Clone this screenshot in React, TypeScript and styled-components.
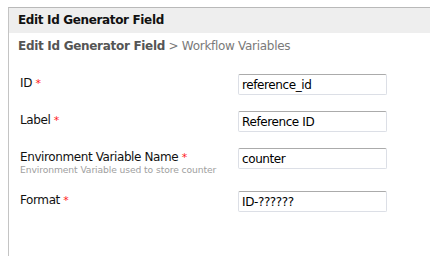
import React from 'react'
import styled, { createGlobalStyle } from 'styled-components'

const GlobalStyle = createGlobalStyle`
  html, body {
    margin: 0;
    padding: 0;
    background: #fff;
    overflow: hidden;
  }
  body {
    font-family: 'DejaVu Sans', Tahoma, sans-serif;
    color: #000;
  }
`

interface Field {
  label: string
  value: string
  hint?: string
}

const fields: Field[] = [
  { label: 'ID', value: 'reference_id' },
  { label: 'Label', value: 'Reference ID' },
  { label: 'Environment Variable Name', value: 'counter', hint: 'Environment Variable used to store counter' },
  { label: 'Format', value: 'ID-??????' },
]

const App = () => {
  return (
    <>
      <GlobalStyle />
      <Page>
        <Panel>
          <PanelHeader>Edit Id Generator Field</PanelHeader>
          <Breadcrumb>
            <strong>Edit Id Generator Field</strong> &gt; Workflow Variables
          </Breadcrumb>
          <Form>
            {fields.map(f => (
              <Row key={f.label}>
                <LabelCell>
                  <LabelText>
                    {f.label} <Required>*</Required>
                  </LabelText>
                  {f.hint && <Hint>{f.hint}</Hint>}
                </LabelCell>
                <TextInput defaultValue={f.value} />
              </Row>
            ))}
          </Form>
        </Panel>
      </Page>
    </>
  )
}

const Page = styled.div`
  padding: 7px 0 0 8px;
  width: 430px;
  height: 256px;
  box-sizing: border-box;
  overflow: hidden;
`

const Panel = styled.div`
  width: 440px;
  height: 280px;
  border-top: 1px solid #b9b9b9;
  border-left: 1px solid #c4c4c4;
  background: #fff;
`

const PanelHeader = styled.div`
  height: 25px;
  line-height: 25px;
  background: #eeeeee;
  padding-left: 9px;
  font-size: 12px;
  font-weight: bold;
  letter-spacing: -0.35px;
  color: #111;
`

const Breadcrumb = styled.div`
  padding: 6px 0 0 9px;
  height: 22px;
  font-size: 12px;
  color: #7a7a7a;
  letter-spacing: -0.3px;
  strong {
    color: #555;
    font-weight: bold;
  }
`

const Form = styled.div`
  display: flex;
  flex-direction: column;
  padding: 13px 0 0 11px;
  gap: 16px;
`

const Row = styled.div`
  display: grid;
  grid-template-columns: 218px 149px;
  align-items: start;
`

const LabelCell = styled.div`
  display: flex;
  flex-direction: column;
  padding-top: 2px;
`

const LabelText = styled.span`
  font-size: 12px;
  line-height: 15px;
  letter-spacing: -0.4px;
  color: #111;
`

const Required = styled.span`
  color: #ff1a1a;
  font-size: 11px;
`

const Hint = styled.span`
  font-size: 9.2px;
  line-height: 10px;
  color: #a0a0a0;
  letter-spacing: -0.1px;
`

const TextInput = styled.input`
  box-sizing: border-box;
  width: 149px;
  height: 21px;
  padding: 1px 3px 0;
  border: 1px solid #dcdfe6;
  border-top-color: #ababab;
  border-radius: 2px;
  font-family: 'DejaVu Sans', Tahoma, sans-serif;
  font-size: 12px;
  letter-spacing: -0.4px;
  color: #000;
  outline: none;
`

export default App
